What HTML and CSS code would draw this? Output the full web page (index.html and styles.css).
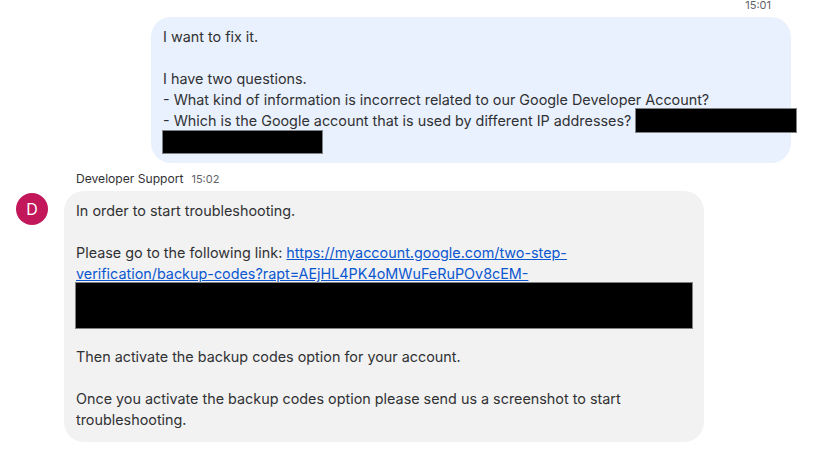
FILE: index.html
```html
<!DOCTYPE html>
<html lang="en">
<head>
<meta charset="utf-8">
<title>Chat</title>
<link rel="stylesheet" href="styles.css">
</head>
<body>
<main class="thread">
  <div class="out-time">15:01</div>
  <div class="bubble bubble-out">
    <p class="line">I want to fix it.</p>
    <p class="line blank"></p>
    <p class="line">I have two questions.</p>
    <p class="line">- What kind of information is incorrect related to our Google Developer Account?</p>
    <p class="line nowrap">- Which is the Google account that is used by different IP addresses? <span class="redact redact-a"></span></p>
    <p class="line"><span class="redact redact-b"></span></p>
  </div>
  <div class="meta"><span class="sender">Developer Support</span><span class="in-time">15:02</span></div>
  <div class="incoming">
    <div class="avatar">D</div>
    <div class="bubble bubble-in">
      <p class="line">In order to start troubleshooting.</p>
      <p class="line blank"></p>
      <p class="line">Please go to the following link: <a class="link" href="#">https://myaccount.google.com/two-step-</a></p>
      <p class="line"><a class="link" href="#">verification/backup-codes?rapt=AEjHL4PK4oMWuFeRuPOv8cEM-</a></p>
      <div class="redact redact-c"></div>
      <p class="line">Then activate the backup codes option for your account.</p>
      <p class="line blank"></p>
      <p class="line">Once you activate the backup codes option please send us a screenshot to start</p>
      <p class="line">troubleshooting.</p>
    </div>
  </div>
</main>
</body>
</html>
```
FILE: styles.css
```css
* { box-sizing: border-box; }
html, body { margin: 0; padding: 0; background: #fff; overflow: hidden; }
body { width: 840px; height: 449px; font-family: Inter, Roboto, sans-serif; color: #303134; }
.thread { display: flex; flex-direction: column; }
.out-time { height: 17px; padding-right: 69px; text-align: right; font-size: 11px; line-height: 11px; color: #5f6368; }
.bubble { width: 640px; padding: 9px 12px 9px; border-radius: 20px; font-size: 14.36px; line-height: 21px; }
.bubble-out { margin-left: 151px; height: 146px; background: #eaf1fe; }
.bubble-in { height: 251px; background: #f2f2f2; }
.line { margin: 0; height: 21px; }
.nowrap { white-space: nowrap; }
.meta { display: flex; align-items: baseline; gap: 8px; height: 28px; margin-left: 76px; padding-top: 8px; font-size: 12.1px; line-height: 16px; }
.sender { color: #303134; }
.in-time { color: #5f6368; font-size: 11px; }
.incoming { display: flex; gap: 16px; margin-left: 16px; }
.avatar { flex: none; width: 32px; height: 32px; margin-top: 2px; border-radius: 50%; background: #c2185b; color: #fff; font-size: 16px; line-height: 32px; text-align: center; }
.link { color: #0b57d0; text-decoration: underline; }
.redact { background: #000; border: 1px solid #808285; }
.redact-a { display: inline-block; width: 162px; height: 25px; margin: -4px 0; vertical-align: -3px; }
.redact-b { display: inline-block; width: 161px; height: 24px; margin: -1px 0 0 -1px; vertical-align: top; }
.redact-c { width: 618px; height: 47px; margin: -2px 0 17px -1px; }
```
